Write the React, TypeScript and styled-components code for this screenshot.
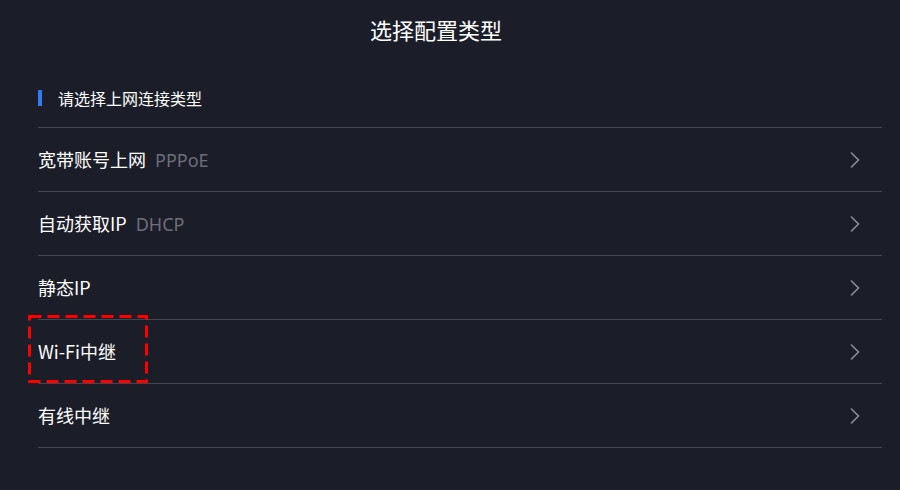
import React from 'react';
import styled, { createGlobalStyle } from 'styled-components';

const GlobalStyle = createGlobalStyle`
  html, body {
    margin: 0;
    padding: 0;
    background: #1b1d29;
  }
  body {
    font-family: "Noto Sans CJK SC", "Noto Sans", sans-serif;
    color: #ffffff;
  }
`;

const Page = styled.div`
  width: 900px;
  height: 490px;
  background: #1b1d29;
  overflow: hidden;
  padding: 0 18px 0 38px;
  box-sizing: border-box;
`;

const Title = styled.h1`
  margin: 0 -18px 0 -38px;
  padding-top: 13px;
  height: 32px;
  line-height: 32px;
  font-size: 22px;
  font-weight: 400;
  text-align: center;
  color: #ffffff;
  text-indent: -28px;
`;

const SectionHeader = styled.div`
  display: flex;
  align-items: flex-start;
  gap: 16px;
  margin-top: 44px;
  height: 38px;
  font-size: 16px;
  border-bottom: 1px solid #44464f;
`;

const Bar = styled.span`
  width: 4px;
  height: 16px;
  margin-top: 1px;
  background: #2f7bf5;
`;

const HeaderText = styled.span`
  line-height: 18px;
`;

const List = styled.div`
  display: flex;
  flex-direction: column;
`;

const Row = styled.div`
  position: relative;
  display: flex;
  align-items: center;
  justify-content: space-between;
  height: 63px;
  border-bottom: 1px solid #44464f;
`;

const Label = styled.span`
  font-size: 18px;
  color: #ffffff;
  padding-bottom: 1px;
`;

const Sub = styled.span`
  color: #6c6f79;
  margin-left: 9px;
  font-family: "Noto Sans", "Open Sans", sans-serif;
`;

const Chevron = styled.svg`
  width: 12px;
  height: 18px;
  margin-right: 21px;
  color: #8b8d97;
`;

const Highlight = styled.svg`
  position: absolute;
  left: -10px;
  top: -5px;
  width: 120px;
  height: 68px;
  pointer-events: none;
`;

type Item = { label: string; sub?: string; marked?: boolean };

const items: Item[] = [
  { label: '宽带账号上网', sub: 'PPPoE' },
  { label: '自动获取IP', sub: 'DHCP' },
  { label: '静态IP' },
  { label: 'Wi-Fi中继', marked: true },
  { label: '有线中继' },
];

export default function App() {
  return (
    <>
      <GlobalStyle />
      <Page>
        <Title>选择配置类型</Title>
        <SectionHeader>
          <Bar />
          <HeaderText>请选择上网连接类型</HeaderText>
        </SectionHeader>
        <List>
          {items.map((it) => (
            <Row key={it.label}>
              {it.marked && (
                <Highlight viewBox="0 0 120 68" fill="none">
                  <rect
                    x="1.5"
                    y="1.5"
                    width="117"
                    height="65"
                    stroke="#ff0000"
                    strokeWidth="3"
                    strokeDasharray="12 6"
                  />
                </Highlight>
              )}
              <Label>
                {it.label}
                {it.sub && <Sub>{it.sub}</Sub>}
              </Label>
              <Chevron viewBox="0 0 12 18" fill="none">
                <path d="M2 1.5 L9.5 9 L2 16.5" stroke="currentColor" strokeWidth="1.6" />
              </Chevron>
            </Row>
          ))}
        </List>
      </Page>
    </>
  );
}
